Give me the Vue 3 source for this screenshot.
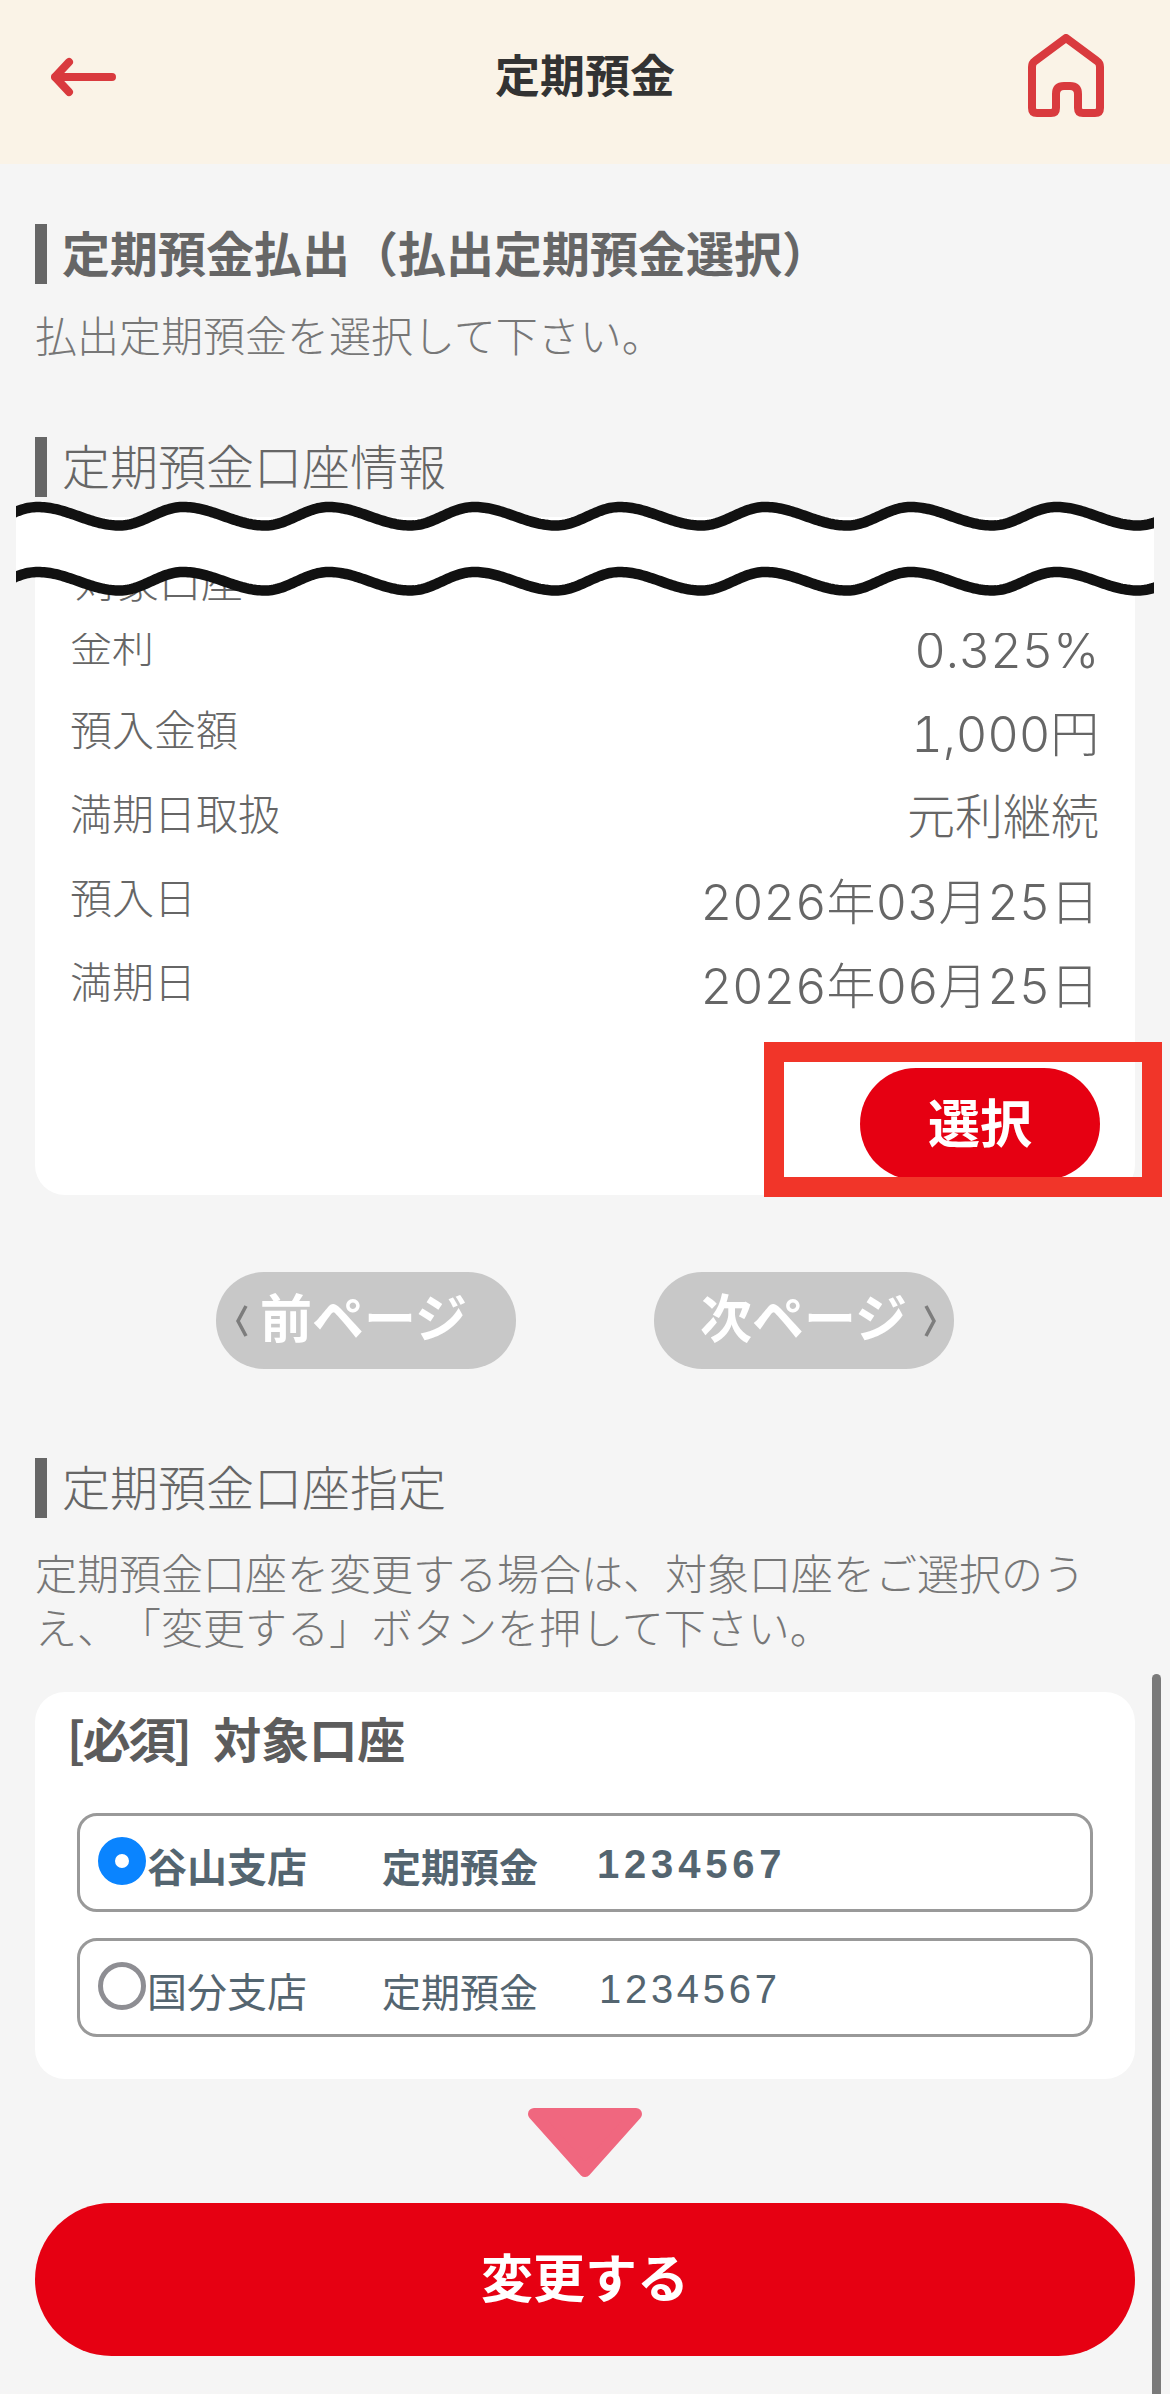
<script setup>
const rows = [
  { label: '対象口座', value: '' },
  { label: '金利', value: '0.325%' },
  { label: '預入金額', value: '1,000円' },
  { label: '満期日取扱', value: '元利継続' },
  { label: '預入日', value: '2026年03月25日' },
  { label: '満期日', value: '2026年06月25日' },
]

const accounts = [
  { branch: '谷山支店', type: '定期預金', number: '1234567', selected: true },
  { branch: '国分支店', type: '定期預金', number: '1234567', selected: false },
]

const isNumeric = (value) => /\d/.test(value)

const period = 145.5
const firstPeak = 21.5
const fall = 82

function waveY(x, peakY, troughY) {
  const t = (((x - firstPeak) % period) + period) % period
  const p = t < fall ? t / fall : 1 - (t - fall) / (period - fall)
  return peakY + (troughY - peakY) * (1 - Math.cos(Math.PI * p)) / 2
}

function wavePoints(peakY, troughY) {
  const pts = []
  for (let x = -4; x <= 1142; x += 2) pts.push([x, waveY(x, peakY, troughY).toFixed(2)])
  return pts
}

const top = wavePoints(7, 25.5)
const bottom = wavePoints(72, 90.5)
const toPath = (pts) => pts.map((p, i) => (i ? 'L' : 'M') + p[0] + ' ' + p[1]).join(' ')
const topPath = toPath(top)
const bottomPath = toPath(bottom)
const bandPath = topPath + ' ' + toPath([...bottom].reverse()).replace('M', 'L') + ' Z'
</script>

<template>
  <div class="page">
    <header class="topbar">
      <div class="topbar-left">
        <svg class="back" viewBox="0 0 70 40" width="70" height="40" aria-hidden="true">
          <path d="M4 20H61M18 5L4 20L18 35" />
        </svg>
      </div>
      <h1 class="topbar-title">定期預金</h1>
      <div class="topbar-right">
        <svg class="home" viewBox="0 0 76 84" width="76" height="84" aria-hidden="true">
          <path d="M38 4L69 27Q72 29 72 33V74Q72 79 67 79H55Q50 79 50 74V60Q50 52 42 52H36Q28 52 28 60V74Q28 79 23 79H9Q4 79 4 74V33Q4 29 7 27Z" />
        </svg>
      </div>
    </header>

    <main class="content">
      <h2 class="heading strong first">定期預金払出（払出定期預金選択）</h2>
      <p class="lead">払出定期預金を選択して下さい。</p>

      <h2 class="heading second">定期預金口座情報</h2>
      <section class="card info">
        <div v-for="row in rows" :key="row.label" class="info-row">
          <span class="info-label">{{ row.label }}</span>
          <span class="info-value" :class="{ numeric: isNumeric(row.value) }">{{ row.value }}</span>
        </div>
        <div class="select-row">
          <button class="select-btn" type="button">選択</button>
        </div>
      </section>

      <nav class="pager">
        <button class="pager-btn prev" type="button">
          <svg class="chev" viewBox="0 0 12 32" width="12" height="32" aria-hidden="true"><path d="M10 1L2 16L10 31" /></svg>
          <span>前ページ</span>
        </button>
        <button class="pager-btn next" type="button">
          <span>次ページ</span>
          <svg class="chev" viewBox="0 0 12 32" width="12" height="32" aria-hidden="true"><path d="M2 1L10 16L2 31" /></svg>
        </button>
      </nav>

      <h2 class="heading third">定期預金口座指定</h2>
      <p class="lead lead-wide">定期預金口座を変更する場合は、対象口座をご選択のうえ、「変更する」ボタンを押して下さい。</p>

      <section class="card account">
        <h3 class="account-title"><span class="account-tag">[必須]</span><span class="account-name">対象口座</span></h3>
        <div
          v-for="item in accounts"
          :key="item.branch"
          class="account-row"
          :class="{ selected: item.selected }"
        >
          <span class="radio"></span>
          <span class="col-branch">{{ item.branch }}</span>
          <span class="col-type">{{ item.type }}</span>
          <span class="col-number">{{ item.number }}</span>
        </div>
      </section>

      <svg class="down" viewBox="0 0 114 69" width="114" height="69" aria-hidden="true">
        <path d="M6 6H108L57 63Z" />
      </svg>

      <button class="submit" type="button">変更する</button>
    </main>

    <div class="splice"></div>
    <svg class="tear" viewBox="0 0 1138 100" width="1138" height="100" aria-hidden="true">
      <path class="tear-fill" :d="bandPath" />
      <path class="tear-line" :d="topPath" />
      <path class="tear-line" :d="bottomPath" />
    </svg>
    <div class="highlight"></div>
    <div class="scrollbar"></div>
  </div>
</template>

<style scoped>
.page {
  position: relative;
  width: 1170px;
  height: 2394px;
  overflow: hidden;
  background: #f5f5f5;
  font-family: "Noto Sans CJK JP", "Noto Sans", sans-serif;
  color: #666;
  text-spacing-trim: space-all;
}

.topbar {
  display: grid;
  grid-template-columns: 1fr auto 1fr;
  align-items: center;
  height: 164px;
  box-sizing: border-box;
  padding: 0 66px 10px;
  background: #faf3e7;
}
.topbar-right {
  display: flex;
  justify-content: flex-end;
}
.topbar-title {
  margin: 0 0 6px;
  font-size: 45px;
  line-height: 60px;
  font-weight: 700;
  color: #333;
}
.back,
.home {
  display: block;
  fill: none;
  stroke: #d93a3e;
  stroke-width: 8;
  stroke-linecap: round;
  stroke-linejoin: round;
}
.back {
  margin-left: -15px;
}
.home {
  margin-top: -3px;
}

.content {
  display: flex;
  flex-direction: column;
  padding: 0 35px;
}

.heading {
  height: 60px;
  margin: 0;
  padding-left: 15px;
  border-left: 12px solid #666;
  font-size: 48px;
  line-height: 54px;
  font-weight: 300;
  color: #666;
  white-space: nowrap;
}
.heading.strong {
  font-weight: 700;
}
.first {
  margin-top: 60px;
}
.second {
  margin-top: 76px;
}
.third {
  margin-top: 89px;
}

.lead {
  margin: 23px 0 0;
  font-size: 42px;
  line-height: 54px;
  font-weight: 300;
  color: #777;
}
.lead-wide {
  width: 1060px;
  margin-top: 27px;
}

.card {
  background: #fff;
  border-radius: 30px;
}

.info {
  margin-top: 20px;
  padding: 21px 36px 15px 35px;
}
.info-row {
  display: flex;
  justify-content: space-between;
  align-items: center;
  height: 84px;
}
.info-row:first-child {
  margin-bottom: -20px;
}
.info-row:first-child .info-label {
  margin-left: 5px;
}
.info-label {
  font-size: 42px;
  line-height: 56px;
  font-weight: 300;
  color: #666;
}
.info-value {
  margin-top: 10px;
  font-family: Inter, "Noto Sans CJK JP", sans-serif;
  font-size: 48px;
  line-height: 60px;
  font-weight: 300;
  color: #666;
}
.info-value.numeric {
  margin-top: 13px;
  font-size: 49px;
  letter-spacing: -0.2px;
  font-variant-numeric: tabular-nums;
}
.select-row {
  display: flex;
  justify-content: flex-end;
  margin-top: 46px;
}
.select-btn {
  width: 240px;
  height: 112px;
  margin-right: -1px;
  padding: 0 0 8px;
  border: 0;
  border-radius: 56px;
  background: #e60012;
  color: #fff;
  font-family: inherit;
  font-size: 52px;
  font-weight: 700;
}

.pager {
  display: flex;
  justify-content: center;
  gap: 138px;
  margin-top: 77px;
}
.pager-btn {
  display: flex;
  align-items: center;
  width: 300px;
  height: 97px;
  box-sizing: border-box;
  padding: 0 0 10px;
  border: 0;
  border-radius: 48px;
  background: #c8c8c8;
  color: #fff;
  font-family: inherit;
  font-size: 52px;
  font-weight: 700;
}
.pager-btn.prev {
  gap: 12px;
  padding-left: 20px;
}
.pager-btn.next {
  justify-content: flex-end;
  gap: 17px;
  padding-right: 18px;
}
.chev {
  flex: none;
  margin-top: 10px;
  fill: none;
  stroke: #7d7d7d;
  stroke-width: 3.5;
}

.account {
  margin-top: 39px;
  padding: 15px 42px 42px;
}
.account-title {
  margin: 0 0 46px -10px;
  font-size: 48px;
  line-height: 60px;
  font-weight: 700;
  color: #5c5c5c;
}
.account-tag {
  letter-spacing: -2.5px;
}
.account-name {
  margin-left: 24px;
}
.account-row {
  display: flex;
  align-items: center;
  height: 99px;
  box-sizing: border-box;
  padding-left: 18px;
  border: 3px solid #999;
  border-radius: 20px;
  font-size: 40px;
  font-weight: 400;
  color: #546570;
}
.account-row + .account-row {
  margin-top: 26px;
}
.account-row.selected {
  font-weight: 700;
}
.radio {
  flex: none;
  width: 48px;
  height: 48px;
  box-sizing: border-box;
  margin-right: 1px;
  margin-top: -4px;
  border: 5px solid #8e8e93;
  border-radius: 50%;
}
.selected .radio {
  border: 17px solid #0a84ff;
}
.col-branch {
  width: 235px;
  flex: none;
  margin-top: 4px;
}
.col-type {
  width: 214px;
  flex: none;
  margin-top: 4px;
  font-size: 39px;
}
.col-number {
  margin-top: 4px;
  padding-left: 3px;
  font-family: "Liberation Sans", sans-serif;
  letter-spacing: 3.7px;
}
.selected .col-number {
  padding-left: 1px;
  letter-spacing: 4.8px;
}

.down {
  display: block;
  align-self: center;
  margin-top: 29px;
  fill: #f0677f;
  stroke: #f0677f;
  stroke-width: 12;
  stroke-linejoin: round;
}

.submit {
  height: 153px;
  margin-top: 26px;
  padding: 0 0 8px;
  border: 0;
  border-radius: 77px;
  background: #e60012;
  color: #fff;
  font-family: inherit;
  font-size: 52px;
  font-weight: 700;
}

.splice {
  position: absolute;
  left: 40px;
  top: 604px;
  width: 1090px;
  height: 29px;
  background: #fff;
}

.tear {
  position: absolute;
  left: 16px;
  top: 500px;
  overflow: hidden;
}
.tear-fill {
  fill: #fff;
}
.tear-line {
  fill: none;
  stroke: #111;
  stroke-width: 10.5;
}

.highlight {
  position: absolute;
  left: 764px;
  top: 1042px;
  width: 398px;
  height: 155px;
  box-sizing: border-box;
  border: 20px solid #f13529;
}

.scrollbar {
  position: absolute;
  left: 1152px;
  top: 1674px;
  bottom: -10px;
  width: 9px;
  border-radius: 5px;
  background: #7a7a7a;
}
</style>

<style>
html,
body {
  margin: 0;
  background: #f5f5f5;
}
</style>
